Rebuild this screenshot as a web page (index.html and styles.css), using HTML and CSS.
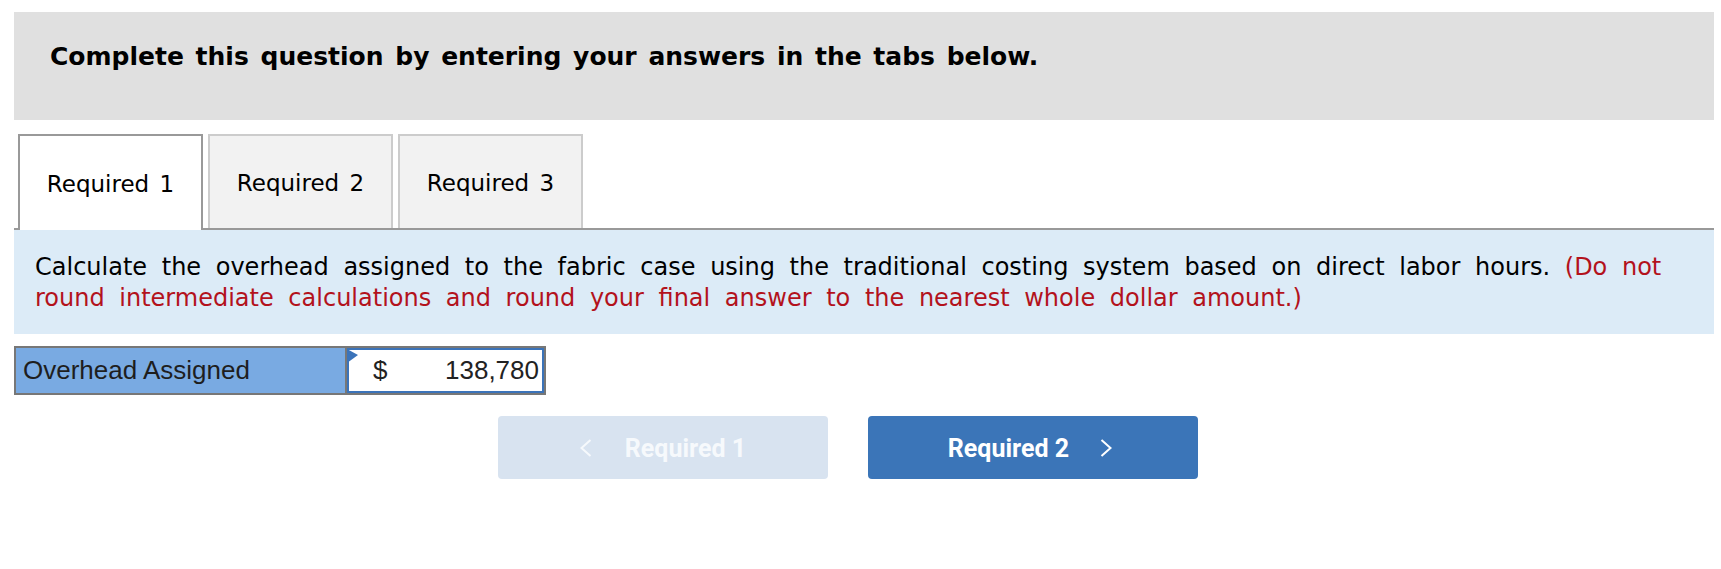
FILE: index.html
```html
<!DOCTYPE html>
<html lang="en">
<head>
<meta charset="utf-8">
<title>Question</title>
<link rel="stylesheet" href="styles.css">
</head>
<body>
<div class="page">
  <div class="prompt">
    <p class="prompt-text">Complete this question by entering your answers in the tabs below.</p>
  </div>

  <div class="tabs">
    <div class="tab active">Required 1</div>
    <div class="tab">Required 2</div>
    <div class="tab">Required 3</div>
  </div>

  <div class="instructions">
    <span>Calculate the overhead assigned to the fabric case using the traditional costing system based on direct labor hours.</span> <span class="note">(Do not</span> <span class="note">round intermediate calculations and round your final answer to the nearest whole dollar amount.)</span>
  </div>

  <div class="answer-row">
    <div class="answer-label">Overhead Assigned</div>
    <div class="answer-value">
      <span class="flag"></span>
      <span class="currency">$</span>
      <span class="amount">138,780</span>
    </div>
  </div>

  <div class="nav">
    <button class="nav-btn disabled" type="button">
      <svg class="chev" width="12" height="18" viewBox="0 0 12 18"><polyline points="10.5,1 1.5,9 10.5,17" fill="none" stroke="currentColor" stroke-width="2"/></svg>
      <span>Required 1</span>
    </button>
    <button class="nav-btn primary" type="button">
      <span>Required 2</span>
      <svg class="chev" width="12" height="18" viewBox="0 0 12 18"><polyline points="1.5,1 10.5,9 1.5,17" fill="none" stroke="currentColor" stroke-width="2"/></svg>
    </button>
  </div>
</div>
</body>
</html>
```

FILE: styles.css
```css
* {
  box-sizing: border-box;
}

body {
  margin: 0;
  background: #ffffff;
  font-family: "DejaVu Sans", Verdana, sans-serif;
  color: #000;
}

.page {
  padding: 12px 7px 0 14px;
}

.prompt {
  background: #e0e0e0;
  height: 108px;
  padding: 30px 36px 0;
}

.prompt-text {
  margin: 0;
  font-weight: bold;
  font-size: 25px;
  word-spacing: 3px;
}

.tabs {
  display: flex;
  align-items: flex-start;
  gap: 5px;
  margin-top: 14px;
  padding-left: 4px;
  border-bottom: 2px solid #999999;
}

.tab {
  width: 185px;
  height: 94px;
  border: 2px solid #cccccc;
  border-bottom: none;
  background: #f2f2f2;
  display: flex;
  align-items: center;
  justify-content: center;
  padding-top: 2px;
  font-size: 23px;
  word-spacing: 3px;
  color: #000;
}

.tab.active {
  background: #ffffff;
  border-color: #999999;
  height: 96px;
  margin-bottom: -2px;
}

.instructions {
  background: #dcebf7;
  padding: 22px 20px 20px 21px;
  font-size: 24px;
  line-height: 31px;
  word-spacing: 7px;
}

.note {
  color: #b3121c;
}

.answer-row {
  display: flex;
  margin-top: 12px;
  height: 49px;
  font-family: "Liberation Sans", Arial, sans-serif;
  font-size: 26px;
}

.answer-label {
  width: 331px;
  border: 2px solid #777777;
  border-right: none;
  background: #79aae2;
  color: #1e1e1e;
  padding-left: 7px;
  display: flex;
  align-items: center;
}

.answer-value {
  position: relative;
  width: 201px;
  border: 2px solid #777777;
  box-shadow: inset 0 0 0 2px #3b73b9;
  background: #ffffff;
  color: #222222;
  display: flex;
  align-items: center;
  justify-content: space-between;
  padding: 0 5px 0 26px;
  font-size: 26px;
}

.flag {
  position: absolute;
  left: 0;
  top: 1px;
  width: 11px;
  height: 14px;
  background: #3b73b9;
  clip-path: polygon(0 0, 100% 42%, 0 100%);
}

.nav {
  display: flex;
  justify-content: center;
  gap: 40px;
  margin-top: 21px;
  padding-right: 32px;
}

.nav-btn {
  width: 330px;
  height: 63px;
  border: none;
  border-radius: 4px;
  display: flex;
  align-items: center;
  justify-content: center;
  gap: 33px;
  font-family: Roboto, "Liberation Sans", sans-serif;
  font-weight: 700;
  font-size: 25px;
  padding: 0;
}

.nav-btn span {
  position: relative;
  top: 1px;
}

.nav-btn.disabled {
  background: #d8e3f0;
  color: #f6f9fc;
}

.nav-btn.primary {
  background: #3b75b8;
  color: #ffffff;
  gap: 31px;
  padding-right: 6px;
}

.chev {
  display: block;
  flex: none;
}
```
